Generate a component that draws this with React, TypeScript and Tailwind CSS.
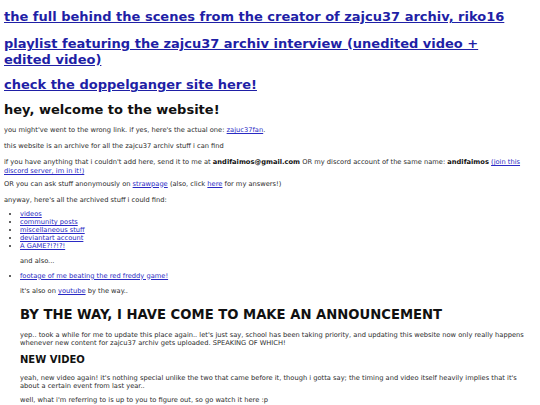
import React from 'react';

const font = { fontFamily: '"DejaVu Sans", Verdana, sans-serif' };

function A({ children }: { children: React.ReactNode }) {
  return <a href="#" className="text-[#2a2ac4] underline">{children}</a>;
}

export default function App() {
  return (
    <div className="min-h-[405px] bg-white px-[4px] text-[#2b2b2b] text-[6.7px] leading-[8.5px]" style={font}>
      {/* top links */}
      <h2 className="pt-[9px] text-[13px] leading-[16px] font-bold">
        <a href="#" className="text-[#1f1fa6] underline">the full behind the scenes from the creator of zajcu37 archiv, riko16</a>
      </h2>
      <h2 className="mt-[11px] text-[13px] leading-[16px] font-bold">
        <a href="#" className="text-[#1f1fa6] underline">playlist featuring the zajcu37 archiv interview (unedited video +<br />edited video)</a>
      </h2>
      <h2 className="mt-[9px] text-[13px] leading-[16px] font-bold">
        <a href="#" className="text-[#1f1fa6] underline">check the doppelganger site here!</a>
      </h2>

      <h1 className="mt-[8px] text-[13px] leading-[18px] font-bold text-[#111]">hey, welcome to the website!</h1>

      <p className="mt-[7px]">you might've went to the wrong link. if yes, here's the actual one: <A>zajuc37fan</A>.</p>
      <p className="mt-[7.5px]">this website is an archive for all the zajcu37 archiv stuff i can find</p>
      <p className="mt-[7.5px] leading-[9px]">
        if you have anything that i couldn't add here, send it to me at <b className="text-[#111]">andifaimos@gmail.com</b> OR my discord account of the same name: <b className="text-[#111]">andifaimos</b> <A>(join this discord server, im in it!)</A>
      </p>
      <p className="mt-[3.5px]">OR you can ask stuff anonymously on <A>strawpage</A> (also, click <A>here</A> for my answers!)</p>
      <p className="mt-[7.5px]">anyway, here's all the archived stuff i could find:</p>

      <ul className="mt-[6px] list-disc pl-[16px] leading-[8px]">
        <li><A>videos</A></li>
        <li><A>community posts</A></li>
        <li><A>miscellaneous stuff</A></li>
        <li><A>deviantart account</A></li>
        <li><A>A GAME?!?!?!</A></li>
      </ul>

      <div className="pl-[16px]">
        <p className="mt-[7px]">and also...</p>
        <ul className="mt-[6px] list-disc">
          <li><A>footage of me beating the red freddy game!</A></li>
        </ul>
        <p className="mt-[7px]">it's also on <A>youtube</A> by the way..</p>

        <h1 className="mt-[9px] text-[13.2px] leading-[20px] font-bold text-[#111]">BY THE WAY, I HAVE COME TO MAKE AN ANNOUNCEMENT</h1>
        <p className="mt-[6px] leading-[8px]">
          yep.. took a while for me to update this place again.. let's just say, school has been taking priority, and updating this website now only really happens whenever new content for zajcu37 archiv gets uploaded. SPEAKING OF WHICH!
        </p>
        <h2 className="mt-[6px] text-[10px] leading-[14px] font-bold text-[#111]">NEW VIDEO</h2>
        <p className="mt-[7px] leading-[8px]">
          yeah, new video again! it's nothing special unlike the two that came before it, though i gotta say; the timing and video itself heavily implies that it's about a certain event from last year..
        </p>
        <p className="mt-[6.5px]">well, what i'm referring to is up to you to figure out, so go watch it here :p</p>
      </div>
    </div>
  );
}
